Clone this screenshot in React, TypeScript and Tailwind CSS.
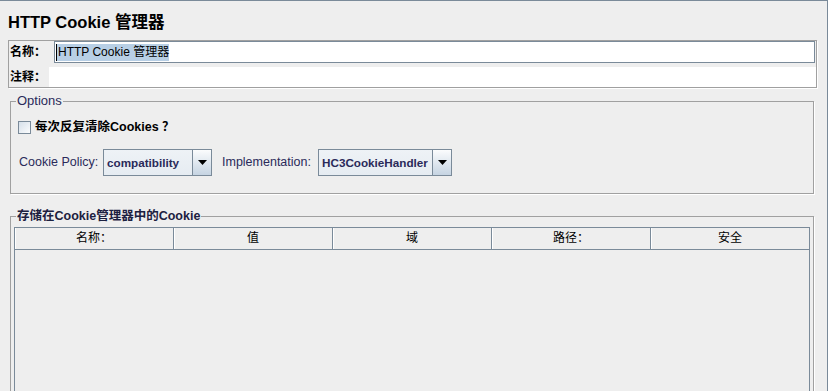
const columns = ["名称：", "值", "域", "路径：", "安全"];

function Combo({ value, width }: { value: string; width: string }) {
  return (
    <div className={`flex h-[27px] border border-[#7a8a99] ${width}`}>
      <div className="flex-1 overflow-hidden whitespace-nowrap bg-gradient-to-b from-[#eef2f6] to-[#e6ecf2] pl-[3px] text-[11.7px] font-bold leading-[25px] text-[#2a2a5a]">
        {value}
      </div>
      <div className="flex w-[19px] items-center justify-center border-l border-[#7a8a99] bg-gradient-to-b from-[#fbfcfd] to-[#c6d4e2]">
        <svg width="9" height="5" viewBox="0 0 9 5">
          <path d="M0 0h9L4.5 5z" fill="#000" />
        </svg>
      </div>
    </div>
  );
}

export default function App() {
  return (
    <div className="flex h-[391px] w-[828px] flex-col overflow-hidden border-t border-r border-[#7a8a99] bg-[#eeeeee] font-['Liberation_Sans','Noto_Sans_CJK_SC',sans-serif] text-[12px] text-black">
      {/* Title */}
      <h1 className="h-[39px] shrink-0 pl-[8px] pt-[11px] text-[16.5px] font-bold leading-[20px]">
        HTTP Cookie 管理器
      </h1>

      {/* Name / comment */}
      <div className="ml-[8px] flex w-[809px] shrink-0 flex-col gap-[4px] border border-[#a0a0a0] shadow-[1px_1px_0_#fff]">
        <div className="flex h-[22px]">
          <span className="w-[45px] pl-[1px] font-bold leading-[22px]">名称：</span>
          <div className="mr-[1px] flex flex-1 items-center border border-[#7a8a99] bg-white pl-[1px]">
            <span className="border-l border-black bg-[#b8cfe5] pl-[1px] leading-[17px]">HTTP Cookie 管理器</span>
          </div>
        </div>
        <div className="flex h-[20px]">
          <span className="w-[40px] pl-[1px] font-bold leading-[20px]">注释：</span>
          <div className="flex-1 bg-white" />
        </div>
      </div>

      {/* Options */}
      <fieldset className="ml-[10px] mt-[5px] h-[101px] w-[804px] shrink-0 border border-[#a0a0a0] shadow-[1px_1px_0_#fff]">
        <legend className="ml-[5px] px-[1px] text-[13px] leading-[16px] text-[#2a2a5a]">Options</legend>
        <div className="mt-[11px] flex h-[14px] items-center gap-[4px] pl-[7px]">
          <div className="h-[13px] w-[13px] border border-[#7a8a99] bg-gradient-to-br from-[#d6e0ea] to-[#fbfcfd]" />
          <span className="text-[12.5px] font-bold">每次反复清除Cookies ？</span>
        </div>
        <div className="mt-[15px] flex items-center pl-[8px]">
          <span className="w-[84px] text-[12.5px] text-[#2a2a5a]">Cookie Policy:</span>
          <Combo value="compatibility" width="w-[109px]" />
          <span className="ml-[10px] w-[96px] text-[12.5px] text-[#2a2a5a]">Implementation:</span>
          <Combo value="HC3CookieHandler" width="w-[134px]" />
        </div>
      </fieldset>

      {/* Stored cookies */}
      <fieldset className="ml-[10px] mt-[14px] h-[220px] w-[804px] shrink-0 border border-[#a0a0a0] shadow-[1px_1px_0_#fff]">
        <legend className="ml-[5px] px-[1px] text-[12.5px] font-bold leading-[16px] text-[#1c2040]">
          存储在Cookie管理器中的Cookie
        </legend>
        <div className="ml-[3px] mt-[3px] w-[796px]">
          <div className="grid h-[23px] grid-cols-5 border border-[#7a8a99] border-r-0">
            {columns.map((c) => (
              <div
                key={c}
                className="border-r border-[#7a8a99] text-center leading-[21px] shadow-[inset_1px_0_0_#fff]"
              >
                {c}
              </div>
            ))}
          </div>
          <div className="h-[200px] border-x border-[#7a8a99] bg-[#eeeeee]" />
        </div>
      </fieldset>
    </div>
  );
}
